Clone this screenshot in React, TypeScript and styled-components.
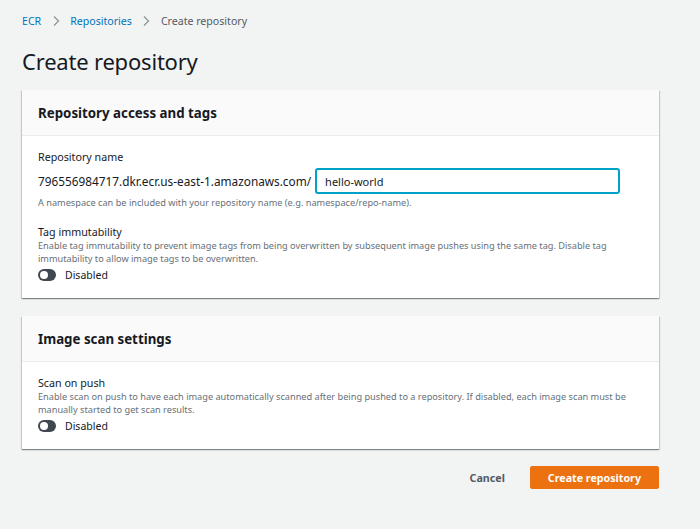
import styled, { createGlobalStyle } from "styled-components";

const GlobalStyle = createGlobalStyle`
  html, body {
    margin: 0;
    padding: 0;
    background: #f2f3f3;
    font-family: "Noto Sans", "Liberation Sans", sans-serif;
    color: #16191f;
  }
`;

const Page = styled.main`
  padding: 13px 41px 30px 22px;
`;

const Breadcrumbs = styled.nav`
  display: flex;
  align-items: center;
  gap: 10.5px;
  font-size: 10.6px;
  height: 16px;
`;

const Crumb = styled.a<{ $current?: boolean }>`
  color: ${(p) => (p.$current ? "#545b64" : "#0073bb")};
  text-decoration: none;
`;

const Chevron = styled.svg`
  width: 8px;
  height: 12px;
  fill: none;
  stroke: #879596;
  stroke-width: 1.2;
`;

const Title = styled.h1`
  margin: 17px 0 0;
  font-size: 22px;
  font-weight: 400;
  line-height: 30px;
  letter-spacing: -0.2px;
`;

const Card = styled.section`
  margin-top: 14px;
  background: #fff;
  box-shadow: 0 1px 1px 0 rgba(0, 28, 36, 0.3), 1px 1px 1px 0 rgba(0, 28, 36, 0.15),
    -1px 1px 1px 0 rgba(0, 28, 36, 0.15);
  & + & {
    margin-top: 18px;
  }
`;

const CardHeader = styled.header`
  background: #fafafa;
  border-bottom: 1px solid #eaeded;
  height: 45px;
  display: flex;
  align-items: center;
  padding: 0 16px;
  h2 {
    margin: 0;
    font-size: 13.3px;
    font-weight: 700;
  }
`;

const CardBody = styled.div`
  padding: 14px 16px 15px;
`;

const Field = styled.div`
  & + & {
    margin-top: 16px;
  }
`;

const Label = styled.div`
  font-size: 10.7px;
  line-height: 14px;
`;

const Description = styled.div`
  font-size: 9.2px;
  line-height: 13px;
  color: #687078;
`;

const PrefixRow = styled.div`
  display: flex;
  align-items: center;
  gap: 5px;
  margin: 5px 0 3px;
  font-size: 11.8px;
  white-space: nowrap;
`;

const Input = styled.input`
  width: 303px;
  height: 24px;
  box-sizing: border-box;
  border: 1px solid #00a1c9;
  box-shadow: 0 0 0 1px #00a1c9;
  border-radius: 2px;
  padding: 0 8px;
  font: inherit;
  font-size: 11px;
  color: #16191f;
  outline: none;
`;

const ToggleRow = styled.label`
  display: flex;
  align-items: center;
  gap: 9px;
  height: 16px;
  font-size: 10.5px;
  margin-top: 2px;
`;

const Track = styled.span`
  width: 18px;
  height: 12px;
  border-radius: 6px;
  background: #414750;
  position: relative;
  &::after {
    content: "";
    position: absolute;
    left: 2px;
    top: 2px;
    width: 8px;
    height: 8px;
    border-radius: 50%;
    background: #fff;
  }
`;

const Actions = styled.div`
  display: flex;
  justify-content: flex-end;
  align-items: center;
  gap: 7px;
  margin-top: 17px;
`;

const Button = styled.button<{ $primary?: boolean }>`
  font: inherit;
  font-size: 10.7px;
  font-weight: 700;
  height: 23px;
  padding: 0 17px;
  border-radius: 2px;
  border: 1px solid ${(p) => (p.$primary ? "#ec7211" : "transparent")};
  background: ${(p) => (p.$primary ? "#ec7211" : "transparent")};
  color: ${(p) => (p.$primary ? "#fff" : "#545b64")};
  cursor: pointer;
`;

function Toggle({ label }: { label: string }) {
  return (
    <ToggleRow>
      <Track />
      <span>{label}</span>
    </ToggleRow>
  );
}

function Sep() {
  return (
    <Chevron viewBox="0 0 8 12">
      <path d="M2 1.5l4.5 4.5L2 10.5" />
    </Chevron>
  );
}

export default function App() {
  return (
    <>
      <GlobalStyle />
      <Page>
        <Breadcrumbs>
          <Crumb href="#">ECR</Crumb>
          <Sep />
          <Crumb href="#">Repositories</Crumb>
          <Sep />
          <Crumb $current>Create repository</Crumb>
        </Breadcrumbs>
        <Title>Create repository</Title>

        <Card>
          <CardHeader>
            <h2>Repository access and tags</h2>
          </CardHeader>
          <CardBody>
            <Field>
              <Label>Repository name</Label>
              <PrefixRow>
                <span>796556984717.dkr.ecr.us-east-1.amazonaws.com/</span>
                <Input defaultValue="hello-world" />
              </PrefixRow>
              <Description>
                A namespace can be included with your repository name (e.g. namespace/repo-name).
              </Description>
            </Field>
            <Field>
              <Label>Tag immutability</Label>
              <Description>
                Enable tag immutability to prevent image tags from being overwritten by subsequent
                image pushes using the same tag. Disable tag immutability to allow image tags to be
                overwritten.
              </Description>
              <Toggle label="Disabled" />
            </Field>
          </CardBody>
        </Card>

        <Card>
          <CardHeader>
            <h2>Image scan settings</h2>
          </CardHeader>
          <CardBody>
            <Field>
              <Label>Scan on push</Label>
              <Description>
                Enable scan on push to have each image automatically scanned after being pushed to a
                repository. If disabled, each image scan must be manually started to get scan
                results.
              </Description>
              <Toggle label="Disabled" />
            </Field>
          </CardBody>
        </Card>

        <Actions>
          <Button>Cancel</Button>
          <Button $primary>Create repository</Button>
        </Actions>
      </Page>
    </>
  );
}
